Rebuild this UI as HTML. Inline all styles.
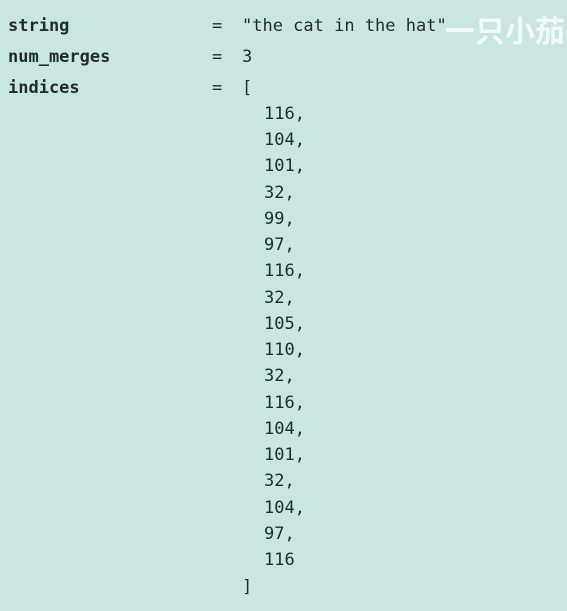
<!DOCTYPE html>
<html><head><meta charset="utf-8"><style>
body{margin:0;width:567px;height:611px;background:#c9e6e3;overflow:hidden;position:relative;font-family:"DejaVu Sans Mono","Liberation Mono",monospace;font-size:17px;color:#1f2b2c}
.l{position:absolute;left:0;height:22px;line-height:22px;white-space:pre}
b{position:absolute;left:8px;font-weight:bold}
.e{position:absolute;left:212px}
.v{position:absolute;left:242px}
.n{position:absolute;left:264px}
.wm{position:absolute;left:445px;top:12px;font-family:"Noto Sans CJK SC",sans-serif;font-weight:bold;font-size:30px;color:rgba(255,255,255,0.8);line-height:34px;white-space:nowrap}
</style></head><body>
<div class="l" style="top:15px"><b>string</b><span class="e">=</span><span class="v">"the cat in the hat"</span></div>
<div class="l" style="top:46px"><b>num_merges</b><span class="e">=</span><span class="v">3</span></div>
<div class="l" style="top:77px"><b>indices</b><span class="e">=</span><span class="v">[</span></div>
<div class="l" style="top:103px"><span class="n">116,</span></div>
<div class="l" style="top:129px"><span class="n">104,</span></div>
<div class="l" style="top:155px"><span class="n">101,</span></div>
<div class="l" style="top:182px"><span class="n">32,</span></div>
<div class="l" style="top:208px"><span class="n">99,</span></div>
<div class="l" style="top:234px"><span class="n">97,</span></div>
<div class="l" style="top:260px"><span class="n">116,</span></div>
<div class="l" style="top:287px"><span class="n">32,</span></div>
<div class="l" style="top:313px"><span class="n">105,</span></div>
<div class="l" style="top:339px"><span class="n">110,</span></div>
<div class="l" style="top:365px"><span class="n">32,</span></div>
<div class="l" style="top:392px"><span class="n">116,</span></div>
<div class="l" style="top:418px"><span class="n">104,</span></div>
<div class="l" style="top:444px"><span class="n">101,</span></div>
<div class="l" style="top:470px"><span class="n">32,</span></div>
<div class="l" style="top:497px"><span class="n">104,</span></div>
<div class="l" style="top:523px"><span class="n">97,</span></div>
<div class="l" style="top:549px"><span class="n">116</span></div>
<div class="l" style="top:576px"><span class="v">]</span></div>
<div class="wm">一只小茄子</div>
</body></html>
